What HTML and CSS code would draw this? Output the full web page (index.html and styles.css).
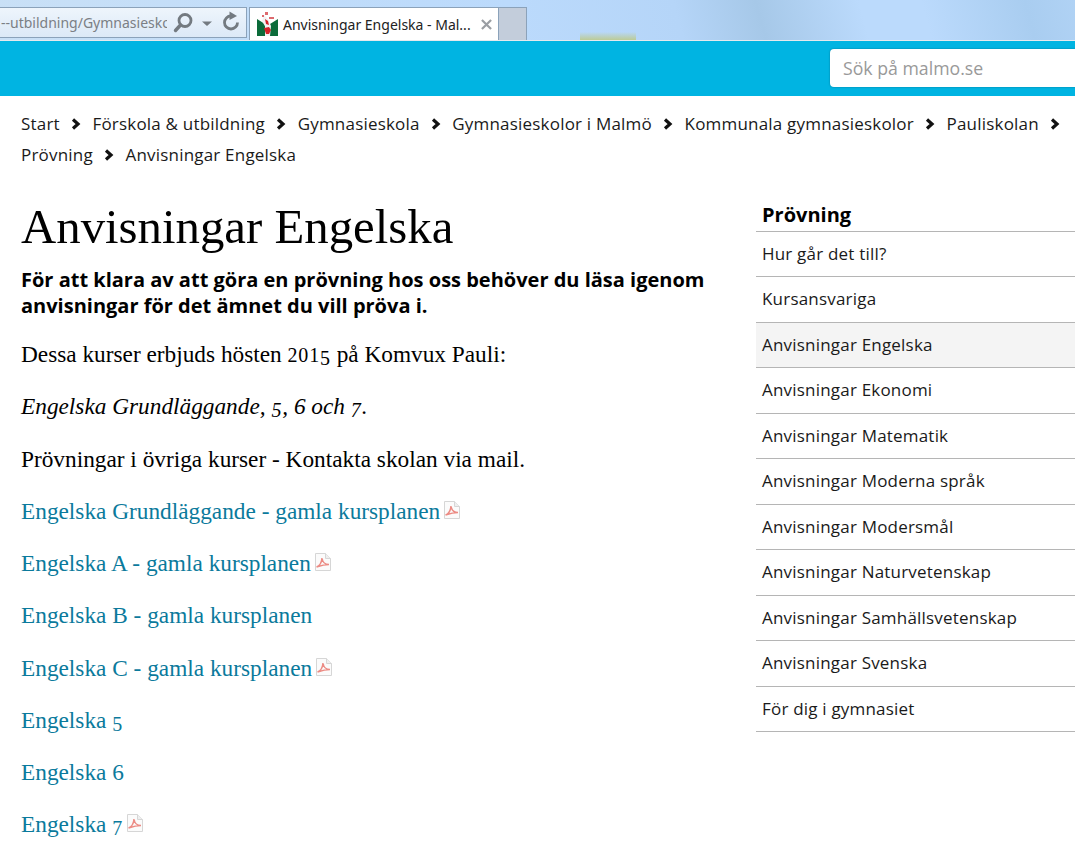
FILE: index.html
```html
<!DOCTYPE html>
<html lang="sv">
<head>
  <meta charset="UTF-8" />
  <title>Anvisningar Engelska - Malmö stad</title>
  <link rel="stylesheet" href="styles.css">
</head>
<body>

  <!-- browser chrome -->
  <div class="chrome">
    <div class="address">
      <span class="address-text">--utbildning/Gymnasieskolor</span>
      <svg class="address-icon" width="70" height="24" viewBox="0 0 70 24">
        <circle cx="13" cy="9.500" r="6" fill="none" stroke="#737a80" stroke-width="2.800"/>
        <path d="M8.500 14L3.500 19.500" stroke="#737a80" stroke-width="3.400" stroke-linecap="round"/>
        <path d="M30 10.500h10l-5 4.500z" fill="#737a80"/>
        <path d="M65.500 11.500A6.500 6.500 0 1 1 59 5" fill="none" stroke="#737a80" stroke-width="2.800"/>
        <path d="M57.500 .5l7.500 4.500-7.500 4z" fill="#737a80"/>
      </svg>
    </div>
    <div class="tab">
      <svg class="favicon" width="21" height="25" viewBox="0 0 21 25">
        <path d="M0 7l8 5v12H0zM21 7l-8 5v12h8z" fill="#0b6b3a"/>
        <path d="M7 3l4 4 3 7-1 10H8l1-8-4-7z" fill="#f3f3f3"/>
        <path d="M8 7l3 2 1 4-3-1zM7 16l5-1 2 3-2 4H9z" fill="#d3232a"/>
        <path d="M8 0h3v3H8zM12 5h5v2h-5zM5 3h2v2H5z" fill="#dd6a6e"/>
      </svg>
      <span class="tab-title">Anvisningar Engelska - Mal...</span>
      <svg class="tab-close" width="11" height="11" viewBox="0 0 12 12">
        <path d="M1 1l10 10M11 1L1 11" stroke="#9a9ea3" stroke-width="2.400"/>
      </svg>
    </div>
    <div class="new-tab"></div>
  </div>

  <header class="site-header">
    <div class="search">Sök på malmo.se</div>
  </header>

  <nav class="breadcrumb">
    <span class="crumb">Start<svg class="crumb-sep" viewBox="0 0 10 12"><path d="M2 1.500L7 6l-5 4.500" fill="none" stroke="#111" stroke-width="3.200"/></svg></span>
    <span class="crumb">Förskola &amp; utbildning<svg class="crumb-sep" viewBox="0 0 10 12"><path d="M2 1.500L7 6l-5 4.500" fill="none" stroke="#111" stroke-width="3.200"/></svg></span>
    <span class="crumb">Gymnasieskola<svg class="crumb-sep" viewBox="0 0 10 12"><path d="M2 1.500L7 6l-5 4.500" fill="none" stroke="#111" stroke-width="3.200"/></svg></span>
    <span class="crumb">Gymnasieskolor i Malmö<svg class="crumb-sep" viewBox="0 0 10 12"><path d="M2 1.500L7 6l-5 4.500" fill="none" stroke="#111" stroke-width="3.200"/></svg></span>
    <span class="crumb">Kommunala gymnasieskolor<svg class="crumb-sep" viewBox="0 0 10 12"><path d="M2 1.500L7 6l-5 4.500" fill="none" stroke="#111" stroke-width="3.200"/></svg></span>
    <span class="crumb">Pauliskolan<svg class="crumb-sep" viewBox="0 0 10 12"><path d="M2 1.500L7 6l-5 4.500" fill="none" stroke="#111" stroke-width="3.200"/></svg></span>
    <span class="crumb">Prövning<svg class="crumb-sep" viewBox="0 0 10 12"><path d="M2 1.500L7 6l-5 4.500" fill="none" stroke="#111" stroke-width="3.200"/></svg></span>
    <span class="crumb">Anvisningar Engelska</span>
  </nav>

  <div class="page">
    <main class="content">
      <h1>Anvisningar Engelska</h1>
      <p class="lede">För att klara av att göra en prövning hos oss behöver du läsa igenom anvisningar för det ämnet du vill pröva i.</p>
      <p>Dessa kurser erbjuds hösten <span class="num-low">201</span><span class="num-down">5</span> på Komvux Pauli:</p>
      <p><em>Engelska Grundläggande, <span class="num-down">5</span>, 6 och <span class="num-down">7</span>.</em></p>
      <p>Prövningar i övriga kurser - Kontakta skolan via mail.</p>
      <p><a class="doc">Engelska Grundläggande - gamla kursplanen</a><svg class="pdf" viewBox="0 0 18 18"><use href="#pdf-icon"/></svg></p>
      <p><a class="doc">Engelska A - gamla kursplanen</a><svg class="pdf" viewBox="0 0 18 18"><use href="#pdf-icon"/></svg></p>
      <p><a class="doc">Engelska B - gamla kursplanen</a></p>
      <p><a class="doc">Engelska C - gamla kursplanen</a><svg class="pdf" viewBox="0 0 18 18"><use href="#pdf-icon"/></svg></p>
      <p><a class="doc">Engelska <span class="num-down">5</span></a></p>
      <p><a class="doc">Engelska 6</a></p>
      <p><a class="doc">Engelska <span class="num-down">7</span></a><svg class="pdf" viewBox="0 0 18 18"><use href="#pdf-icon"/></svg></p>
    </main>

    <aside class="side-nav">
      <h2>Prövning</h2>
      <ul>
        <li>Hur går det till?</li>
        <li>Kursansvariga</li>
        <li class="current">Anvisningar Engelska</li>
        <li>Anvisningar Ekonomi</li>
        <li>Anvisningar Matematik</li>
        <li>Anvisningar Moderna språk</li>
        <li>Anvisningar Modersmål</li>
        <li>Anvisningar Naturvetenskap</li>
        <li>Anvisningar Samhällsvetenskap</li>
        <li>Anvisningar Svenska</li>
        <li>För dig i gymnasiet</li>
      </ul>
    </aside>
  </div>

  <svg width="0" height="0" class="defs">
    <symbol id="pdf-icon" viewBox="0 0 18 18">
      <path d="M1.500 .5h10l5 5v12h-15z" fill="#fbfbfb" stroke="#d6d6d6"/>
      <path d="M11.500 .5v5h5" fill="#efefef" stroke="#d6d6d6"/>
      <path d="M2.500 14c3-1 5-4 5.500-9 .5 4 3 6.500 7 6.500-4 0-8 1-12.500 2.500z" fill="none" stroke="#ec8b84" stroke-width="1.500"/>
    </symbol>
  </svg>

</body>
</html>
```

FILE: styles.css
```css
html, body {
  overflow: hidden;
}

body {
  margin: 0;
  height: 844px;
  background: white;
  color: black;
  font-family: 'Open Sans', sans-serif;
}

/* browser chrome */
.chrome {
  display: flex;
  align-items: flex-start;
  height: 41px;
  padding-top: 7px;
  box-sizing: border-box;
  background:
    linear-gradient(to bottom, rgba(181, 199, 127, 0), #bccb96) 580px 32px / 56px 8px no-repeat,
    linear-gradient(75deg, #c9e0f6 0, #bbdafc 500px, #b5d5f8 660px, #a6c8e8 740px, #bbdafc 840px, #bbdafc 900px, #a9cdf0 1000px, #b4d5f7 1075px);
  border-bottom: 1px solid #e6e9ed;
}

.address {
  display: flex;
  align-items: center;
  flex-shrink: 0;
  width: 247px;
  height: 31px;
  box-sizing: border-box;
  background: linear-gradient(to bottom, #eef5fc, #dce9f7);
  border: 1px solid #8ba2ba;
  border-left: none;
  margin-right: 2px;
  overflow: hidden;
}

.address-text {
  flex: 0 0 166px;
  overflow: hidden;
  white-space: nowrap;
  font-family: 'Noto Sans', sans-serif;
  font-size: 14px;
  color: #7b7f85;
  margin-left: 1px;
}

.address-icon {
  flex-shrink: 0;
  margin-left: 5px;
}

.tab {
  display: flex;
  align-items: center;
  width: 250px;
  height: 33px;
  box-sizing: border-box;
  background: white;
  border: 1px solid #8ba2ba;
  border-bottom: none;
}

.favicon {
  margin-left: 7px;
}

.tab-title {
  margin-left: 5px;
  font-family: 'Noto Sans', sans-serif;
  font-size: 14px;
  white-space: nowrap;
  color: #222;
}

.tab-close {
  margin-left: 10px;
}

.new-tab {
  width: 28px;
  height: 33px;
  box-sizing: border-box;
  background: #c3cddb;
  border: 1px solid #8ba2ba;
  border-left: none;
  border-bottom: none;
}

/* site header */
.site-header {
  display: flex;
  height: 55px;
  padding-top: 8px;
  box-sizing: border-box;
  background-color: #00b4e2;
}

.search {
  flex-shrink: 0;
  margin-left: auto;
  width: 245px;
  height: 38px;
  line-height: 38px;
  padding-left: 13px;
  box-sizing: border-box;
  background: white;
  border-radius: 4px 0 0 4px;
  box-shadow: 0 0 2px rgba(0, 0, 0, 0.35);
  color: #999;
  font-size: 17.700px;
}

/* breadcrumb */
.breadcrumb {
  display: flex;
  flex-wrap: wrap;
  row-gap: 9px;
  padding: 17px 0 0 21px;
  font-size: 17px;
  letter-spacing: 0.2px;
  line-height: 22px;
  color: #1a1a1a;
}

.crumb {
  display: flex;
  align-items: center;
}

.crumb-sep {
  width: 10px;
  height: 12px;
  margin: 0 11.300px;
}

/* main area */
.page {
  display: flex;
  margin-top: 20px;
}

.content {
  width: 735px;
  flex-shrink: 0;
  padding-left: 21px;
  box-sizing: border-box;
  font-family: 'Liberation Serif', serif;
  font-size: 23.300px;
}

h1 {
  margin: 13px 0 12px;
  font-size: 48.800px;
  font-weight: normal;
  line-height: 56px;
}

p {
  margin: 0 0 21px;
  line-height: 31.250px;
}

p.lede {
  margin-bottom: 20px;
  font-family: 'Open Sans', sans-serif;
  font-size: 20px;
  font-weight: 700;
  line-height: 26px;
}

/* Georgia style old numbers, the serif we have only has lining ones */
.num-low, .num-down {
  font-size: 0.86em;
  letter-spacing: 0.04em;
  line-height: 0;
}

.num-down {
  vertical-align: -0.14em;
}

a.doc {
  color: #0b7a9c;
}

.pdf {
  width: 18px;
  height: 18px;
  margin-left: 3px;
}

.defs {
  position: absolute;
}

/* right side menu */
.side-nav {
  width: 319px;
  flex-shrink: 0;
  margin: 14.500px 0 0 21px;
}

.side-nav h2 {
  margin: 0;
  height: 31px;
  padding-left: 6px;
  box-sizing: border-box;
  border-bottom: 1px solid #b5b5b5;
  font-size: 20px;
  line-height: 28px;
}

.side-nav ul {
  list-style: none;
  margin: 0;
  padding: 0;
}

.side-nav li {
  height: 45.500px;
  box-sizing: border-box;
  padding-left: 6px;
  border-bottom: 1px solid #b5b5b5;
  font-size: 17px;
  letter-spacing: 0.2px;
  line-height: 44.500px;
  color: #1a1a1a;
}

.side-nav li.current {
  background: #f4f4f4;
}
```
